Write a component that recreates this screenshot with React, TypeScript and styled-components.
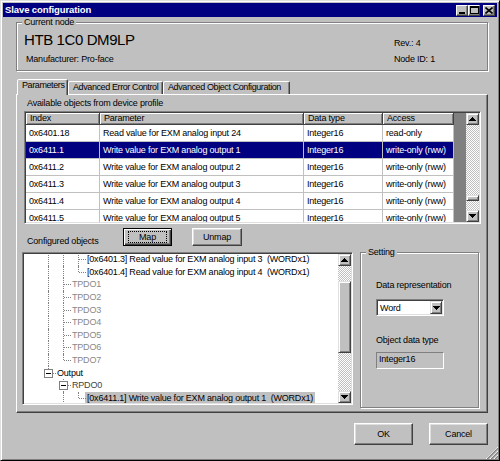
import React from "react";
import styled, { createGlobalStyle, css } from "styled-components";

const FACE = "#c0c0c0";
const SHADOW = "#808080";
const DARK = "#404040";
const LIGHT = "#dfdfdf";
const NAVY = "#000080";

const GlobalStyle = createGlobalStyle`
  * { box-sizing: border-box; }
  html, body { margin: 0; padding: 0; background: ${FACE}; }
  body {
    font-family: "Liberation Sans", Arial, sans-serif;
    font-size: 9px;
    letter-spacing: -0.2px;
    color: #000;
  }
  #root { width: 500px; height: 461px; }
`;

const raised = css`
  border: 1px solid;
  border-color: #fff ${DARK} ${DARK} #fff;
  box-shadow: inset -1px -1px ${SHADOW}, inset 1px 1px ${LIGHT};
`;

const sunken = css`
  border: 1px solid;
  border-color: ${SHADOW} #fff #fff ${SHADOW};
  padding: 1px;
  box-shadow: inset 1px 1px ${DARK}, inset -1px -1px ${LIGHT};
`;

const Window = styled.div`
  position: relative;
  width: 500px;
  height: 461px;
  background: ${FACE};
  border: 1px solid;
  border-color: ${LIGHT} #000 #000 ${LIGHT};
  box-shadow: inset 1px 1px #fff, inset -1px -1px ${SHADOW};
  padding: 2px;
  display: flex;
  flex-direction: column;
`;

const TitleBar = styled.div`
  height: 14px;
  flex: none;
  background: ${NAVY};
  color: #fff;
  display: flex;
  align-items: center;
  padding: 0 2px;
`;

const TitleText = styled.span`
  font-weight: bold;
  font-size: 9.5px;
  letter-spacing: -0.1px;
  line-height: 12px;
`;

const TitleButtons = styled.div`
  margin-left: auto;
  display: flex;
  align-items: center;
`;

const CaptionButton = styled.div<{ $gap?: number }>`
  width: 12px;
  height: 11px;
  margin-left: ${(p) => p.$gap ?? 0}px;
  background: ${FACE};
  border: 1px solid;
  border-color: #fff ${DARK} ${DARK} #fff;
  box-shadow: inset -1px -1px ${SHADOW};
  display: flex;
  align-items: center;
  justify-content: center;
  svg { display: block; }
`;

const GroupBox = styled.fieldset`
  margin: 0;
  min-width: 0;
  border: 1px solid ${SHADOW};
  box-shadow: 1px 1px 0 #fff, inset 1px 1px 0 #fff;
`;

const Legend = styled.legend`
  padding: 0 2px;
  line-height: 11px;
  background: ${FACE};
`;

const NodeGroup = styled(GroupBox)`
  flex: none;
  margin: 0 9px 0 13px;
  padding: 0 8px 5px 5px;
`;

const NodeInfo = styled.div`
  display: grid;
  grid-template-columns: 1fr 85px;
`;

const NodeColumn = styled.div<{ $pt?: number }>`
  display: flex;
  flex-direction: column;
  padding-top: ${(p) => p.$pt ?? 0}px;
`;

const NodeName = styled.div`
  font-size: 15px;
  letter-spacing: -0.4px;
  line-height: 17px;
  margin-top: 3px;
  padding-left: 2px;
`;

const InfoLine = styled.div<{ $mt?: number; $pl?: number }>`
  line-height: 11px;
  margin-top: ${(p) => p.$mt ?? 0}px;
  padding-left: ${(p) => p.$pl ?? 0}px;
`;

const TabStrip = styled.div`
  display: flex;
  align-items: flex-end;
  height: 15px;
  flex: none;
  margin: 8px 0 0 14px;
  position: relative;
  z-index: 1;
`;

const Tab = styled.div<{ $active?: boolean; $w: number }>`
  width: ${(p) => p.$w}px;
  height: ${(p) => (p.$active ? 16 : 13)}px;
  margin-bottom: ${(p) => (p.$active ? -1 : 0)}px;
  padding: 0 0 0 4px;
  background: ${FACE};
  border: 1px solid;
  border-bottom: none;
  border-color: #fff ${DARK} transparent #fff;
  box-shadow: inset -1px 0 ${SHADOW};
  border-radius: 2px 2px 0 0;
  line-height: 11px;
  letter-spacing: -0.4px;
  white-space: nowrap;
  overflow: hidden;
  flex: none;
`;

const TabPanel = styled.div`
  margin: 0 9px 0 13px;
  height: 319px;
  flex: none;
  border: 1px solid;
  border-color: #fff ${DARK} ${DARK} #fff;
  box-shadow: inset -1px -1px ${SHADOW};
  padding-top: 3px;
  display: flex;
  flex-direction: column;
`;

const SectionLabel = styled.div`
  line-height: 11px;
  margin-left: 10px;
`;

const ListView = styled.div`
  ${sunken};
  width: 457px;
  height: 113px;
  margin: 2px 0 0 7px;
  display: flex;
  flex: none;
`;

const ListArea = styled.div`
  flex: 1;
  min-width: 0;
  background: ${SHADOW};
  overflow: hidden;
`;

const ListHeader = styled.div`
  display: flex;
  height: 12px;
`;

const HeaderCell = styled.div<{ $w: number }>`
  width: ${(p) => p.$w}px;
  flex: none;
  background: ${FACE};
  border-right: 1px solid ${DARK};
  border-bottom: 1px solid ${DARK};
  box-shadow: inset 1px 1px #fff, inset -1px -1px ${SHADOW};
  padding-left: 4px;
  line-height: 11px;
  white-space: nowrap;
`;

const ListRow = styled.div`
  display: flex;
  height: 17px;
`;

const Cell = styled.div<{ $w: number; $selected?: boolean }>`
  width: ${(p) => p.$w}px;
  flex: none;
  background: ${(p) => (p.$selected ? NAVY : "#fff")};
  color: ${(p) => (p.$selected ? "#fff" : "#000")};
  border-right: 1px solid ${FACE};
  border-bottom: 1px solid ${FACE};
  padding-left: 3px;
  display: flex;
  align-items: center;
  white-space: nowrap;
  overflow: hidden;
`;

const ScrollBar = styled.div`
  width: 13px;
  flex: none;
  display: flex;
  flex-direction: column;
`;

const ScrollButton = styled.div`
  height: 12px;
  flex: none;
  background: ${FACE};
  border: 1px solid;
  border-color: ${LIGHT} ${DARK} ${DARK} ${LIGHT};
  box-shadow: inset 1px 1px #fff, inset -1px -1px ${SHADOW};
  display: flex;
  align-items: center;
  justify-content: center;
  svg { display: block; }
`;

const Track = styled.div`
  flex: 1;
  display: flex;
  flex-direction: column;
  background: repeating-conic-gradient(${FACE} 0% 25%, #fff 0% 50%) 0 0 / 2px 2px;
`;

const TrackGap = styled.div<{ $grow: number }>`
  flex: ${(p) => p.$grow} 1 0;
`;

const Thumb = styled.div<{ $h: number }>`
  height: ${(p) => p.$h}px;
  flex: none;
  background: ${FACE};
  border: 1px solid;
  border-color: ${LIGHT} ${DARK} ${DARK} ${LIGHT};
  box-shadow: inset 1px 1px #fff, inset -1px -1px ${SHADOW};
`;

const MapRow = styled.div`
  display: flex;
  align-items: flex-start;
  height: 19px;
  flex: none;
  margin-top: 4px;
  padding-left: 10px;
`;

const MapLabel = styled.div`
  width: 96px;
  flex: none;
  margin-top: 8px;
  line-height: 11px;
`;

const PushButton = styled.button<{ $w: number; $h: number; $default?: boolean; $ml?: number }>`
  width: ${(p) => p.$w}px;
  height: ${(p) => p.$h}px;
  margin: 0 0 0 ${(p) => p.$ml ?? 0}px;
  padding: 2px 4px;
  font: inherit;
  letter-spacing: inherit;
  color: #000;
  background: ${FACE};
  ${raised};
  display: flex;
  flex: none;
  ${(p) =>
    p.$default &&
    css`
      border-color: #000;
      box-shadow: inset 1px 1px #fff, inset -1px -1px ${DARK}, inset -2px -2px ${SHADOW};
    `}
`;

const ButtonFace = styled.span<{ $focus?: boolean }>`
  flex: 1;
  display: flex;
  align-items: center;
  justify-content: center;
  line-height: 10px;
  border: 1px ${(p) => (p.$focus ? "dotted #000" : "solid transparent")};
`;

const LowerRow = styled.div`
  display: flex;
  align-items: flex-start;
  padding-left: 5px;
  flex: none;
`;

const TreeView = styled.div`
  ${sunken};
  width: 331px;
  height: 153px;
  margin-top: 5px;
  display: flex;
  flex: none;
`;

const TreeArea = styled.div`
  flex: 1;
  min-width: 0;
  background: #fff;
  overflow: hidden;
`;

const TreeList = styled.div`
  margin-top: -1px;
`;

const TreeRow = styled.div`
  display: flex;
  height: 12.6px;
  padding-left: 17px;
  white-space: pre;
`;

type GuideKind = "blank" | "pipe" | "tee" | "ell";

const Guide = styled.div<{ $kind: GuideKind }>`
  position: relative;
  width: 15px;
  flex: none;
  ${(p) =>
    p.$kind !== "blank" &&
    css`
      &::before {
        content: "";
        position: absolute;
        left: 7px;
        top: 0;
        height: ${p.$kind === "ell" ? "50%" : "100%"};
        border-left: 1px dotted ${SHADOW};
      }
    `}
  ${(p) =>
    (p.$kind === "tee" || p.$kind === "ell") &&
    css`
      &::after {
        content: "";
        position: absolute;
        left: 8px;
        right: 0;
        top: 50%;
        border-top: 1px dotted ${SHADOW};
      }
    `}
`;

const ExpandBox = styled.span`
  position: absolute;
  left: 3px;
  top: calc(50% - 4px);
  width: 9px;
  height: 9px;
  border: 1px solid ${SHADOW};
  background: #fff;
  z-index: 1;
  &::after {
    content: "";
    position: absolute;
    left: 1px;
    top: 3px;
    width: 5px;
    height: 1px;
    background: #000;
  }
`;

type Tone = "normal" | "muted" | "dim";

const TreeLabel = styled.span<{ $tone: Tone; $selected?: boolean }>`
  display: flex;
  align-items: center;
  margin-left: -1px;
  padding: 0 2px;
  color: ${(p) => (p.$tone === "muted" ? "#888" : p.$tone === "dim" ? "#444" : "#000")};
  background: ${(p) => (p.$selected ? FACE : "transparent")};
`;

const SettingGroup = styled(GroupBox)`
  width: 119px;
  height: 161px;
  margin-left: 7px;
  padding: 0 0 0 5px;
  flex: none;
`;

const SettingBody = styled.div`
  margin-left: 10px;
  display: flex;
  flex-direction: column;
  align-items: flex-start;
`;

const FieldLabel = styled.div<{ $mt: number }>`
  line-height: 11px;
  margin-top: ${(p) => p.$mt}px;
  white-space: nowrap;
`;

const ComboBox = styled.div`
  ${sunken};
  width: 68px;
  height: 17px;
  margin-top: 8.5px;
  background: #fff;
  display: flex;
`;

const ComboText = styled.div`
  flex: 1;
  padding-left: 2px;
  display: flex;
  align-items: center;
`;

const DropButton = styled.div`
  width: 12px;
  flex: none;
  background: ${FACE};
  border: 1px solid;
  border-color: ${LIGHT} ${DARK} ${DARK} ${LIGHT};
  box-shadow: inset 1px 1px #fff, inset -1px -1px ${SHADOW};
  display: flex;
  align-items: center;
  justify-content: center;
  svg { display: block; }
`;

const ReadOnlyField = styled.div`
  width: 68px;
  height: 17px;
  margin-top: 6.5px;
  border: 1px solid;
  border-color: ${SHADOW} #fff #fff ${SHADOW};
  padding: 1px 2px;
  line-height: 11px;
`;

const ButtonRow = styled.div`
  display: flex;
  justify-content: flex-end;
  gap: 16px;
  margin-top: 10px;
  padding-right: 9px;
  flex: none;
`;

const SizeGrip = styled.div`
  position: absolute;
  right: 1px;
  bottom: 1px;
  width: 12px;
  height: 12px;
  svg { display: block; }
`;

const ArrowIcon = ({ dir }: { dir: "up" | "down" }) => (
  <svg width="7" height="4" viewBox="0 0 7 4" shapeRendering="crispEdges">
    <path
      fill="#000"
      d={
        dir === "up"
          ? "M3 0h1v1h1v1h1v1h1v1H0V3h1V2h1V1h1z"
          : "M0 0h7v1H6v1H5v1H4v1H3V3H2V2H1V1H0z"
      }
    />
  </svg>
);

const VScroll = ({ before, thumb, after }: { before: number; thumb: number; after: number }) => (
  <ScrollBar>
    <ScrollButton>
      <ArrowIcon dir="up" />
    </ScrollButton>
    <Track>
      <TrackGap $grow={before} />
      <Thumb $h={thumb} />
      <TrackGap $grow={after} />
    </Track>
    <ScrollButton>
      <ArrowIcon dir="down" />
    </ScrollButton>
  </ScrollBar>
);

const columns = [
  { title: "Index", w: 74 },
  { title: "Parameter", w: 204 },
  { title: "Data type", w: 79 },
  { title: "Access", w: 71 },
];

const rows = [
  ["0x6401.18", "Read value for EXM analog input 24", "Integer16", "read-only"],
  ["0x6411.1", "Write value for EXM analog output 1", "Integer16", "write-only (rww)"],
  ["0x6411.2", "Write value for EXM analog output 2", "Integer16", "write-only (rww)"],
  ["0x6411.3", "Write value for EXM analog output 3", "Integer16", "write-only (rww)"],
  ["0x6411.4", "Write value for EXM analog output 4", "Integer16", "write-only (rww)"],
  ["0x6411.5", "Write value for EXM analog output 5", "Integer16", "write-only (rww)"],
];

type TreeItem = {
  guides: GuideKind[];
  box?: boolean;
  text: string;
  tone?: Tone;
  selected?: boolean;
};

const treeItems: TreeItem[] = [
  { guides: ["pipe", "pipe", "tee"], text: "[0x6401.3] Read value for EXM analog input 3  (WORDx1)" },
  { guides: ["pipe", "pipe", "ell"], text: "[0x6401.4] Read value for EXM analog input 4  (WORDx1)" },
  { guides: ["pipe", "tee"], text: "TPDO1", tone: "muted" },
  { guides: ["pipe", "tee"], text: "TPDO2", tone: "muted" },
  { guides: ["pipe", "tee"], text: "TPDO3", tone: "muted" },
  { guides: ["pipe", "tee"], text: "TPDO4", tone: "muted" },
  { guides: ["pipe", "tee"], text: "TPDO5", tone: "muted" },
  { guides: ["pipe", "tee"], text: "TPDO6", tone: "muted" },
  { guides: ["pipe", "ell"], text: "TPDO7", tone: "muted" },
  { guides: ["ell"], box: true, text: "Output" },
  { guides: ["blank", "tee"], box: true, text: "RPDO0", tone: "dim" },
  {
    guides: ["blank", "pipe", "ell"],
    text: "[0x6411.1] Write value for EXM analog output 1  (WORDx1)",
    selected: true,
  },
];

export default function App() {
  return (
    <>
      <GlobalStyle />
      <Window>
        <TitleBar>
          <TitleText>Slave configuration</TitleText>
          <TitleButtons>
            <CaptionButton>
              <svg width="8" height="7" viewBox="0 0 8 7" shapeRendering="crispEdges">
                <rect x="1" y="5" width="6" height="2" fill="#000" />
              </svg>
            </CaptionButton>
            <CaptionButton>
              <svg width="9" height="8" viewBox="0 0 9 8" shapeRendering="crispEdges">
                <rect x="0.5" y="0.5" width="8" height="7" fill="none" stroke="#000" />
                <rect x="0" y="0" width="9" height="2" fill="#000" />
              </svg>
            </CaptionButton>
            <CaptionButton $gap={3}>
              <svg width="8" height="7" viewBox="0 0 8 7">
                <path d="M0.5 0.5 L7.5 6.5 M7.5 0.5 L0.5 6.5" stroke="#000" strokeWidth="1.6" />
              </svg>
            </CaptionButton>
          </TitleButtons>
        </TitleBar>

        <NodeGroup>
          <Legend>Current node</Legend>
          <NodeInfo>
            <NodeColumn>
              <NodeName>HTB 1C0 DM9LP</NodeName>
              <InfoLine $mt={6} $pl={4}>
                Manufacturer: Pro-face
              </InfoLine>
            </NodeColumn>
            <NodeColumn $pt={9.5}>
              <InfoLine>Rev.: 4</InfoLine>
              <InfoLine $mt={5}>Node ID: 1</InfoLine>
            </NodeColumn>
          </NodeInfo>
        </NodeGroup>

        <TabStrip>
          <Tab $active $w={51}>Parameters</Tab>
          <Tab $w={95}>Advanced Error Control</Tab>
          <Tab $w={127}>Advanced Object Configuration</Tab>
        </TabStrip>

        <TabPanel>
          <SectionLabel>Available objects from device profile</SectionLabel>
          <ListView>
            <ListArea>
              <ListHeader>
                {columns.map((c) => (
                  <HeaderCell key={c.title} $w={c.w}>
                    {c.title}
                  </HeaderCell>
                ))}
              </ListHeader>
              {rows.map((r, i) => (
                <ListRow key={r[0]}>
                  {r.map((v, j) => (
                    <Cell key={j} $w={columns[j].w} $selected={i === 1}>
                      {v}
                    </Cell>
                  ))}
                </ListRow>
              ))}
            </ListArea>
            <VScroll before={70} thumb={6} after={9} />
          </ListView>

          <MapRow>
            <MapLabel>Configured objects</MapLabel>
            <PushButton $w={49} $h={18} $default>
              <ButtonFace $focus>Map</ButtonFace>
            </PushButton>
            <PushButton $w={50} $h={18} $ml={20}>
              <ButtonFace>Unmap</ButtonFace>
            </PushButton>
          </MapRow>

          <LowerRow>
            <TreeView>
              <TreeArea>
                <TreeList>
                  {treeItems.map((item, i) => (
                    <TreeRow key={i}>
                      {item.guides.map((g, k) => (
                        <Guide key={k} $kind={g}>
                          {item.box && k === item.guides.length - 1 && <ExpandBox />}
                        </Guide>
                      ))}
                      <TreeLabel $tone={item.tone ?? "normal"} $selected={item.selected}>
                        {item.text}
                      </TreeLabel>
                    </TreeRow>
                  ))}
                </TreeList>
              </TreeArea>
              <VScroll before={15} thumb={72} after={38} />
            </TreeView>

            <SettingGroup>
              <Legend>Setting</Legend>
              <SettingBody>
                <FieldLabel $mt={21.5}>Data representation</FieldLabel>
                <ComboBox>
                  <ComboText>Word</ComboText>
                  <DropButton>
                    <ArrowIcon dir="down" />
                  </DropButton>
                </ComboBox>
                <FieldLabel $mt={18.5}>Object data type</FieldLabel>
                <ReadOnlyField>Integer16</ReadOnlyField>
              </SettingBody>
            </SettingGroup>
          </LowerRow>
        </TabPanel>

        <ButtonRow>
          <PushButton $w={59} $h={22}>
            <ButtonFace>OK</ButtonFace>
          </PushButton>
          <PushButton $w={59} $h={22}>
            <ButtonFace>Cancel</ButtonFace>
          </PushButton>
        </ButtonRow>

        <SizeGrip>
          <svg width="12" height="12" viewBox="0 0 12 12">
            {[0, 4, 8].map((o) => (
              <g key={o}>
                <line x1={12} y1={o} x2={o} y2={12} stroke="#fff" strokeWidth="1" />
                <line x1={12} y1={o + 1.2} x2={o + 1.2} y2={12} stroke={SHADOW} strokeWidth="1.3" />
              </g>
            ))}
          </svg>
        </SizeGrip>
      </Window>
    </>
  );
}
